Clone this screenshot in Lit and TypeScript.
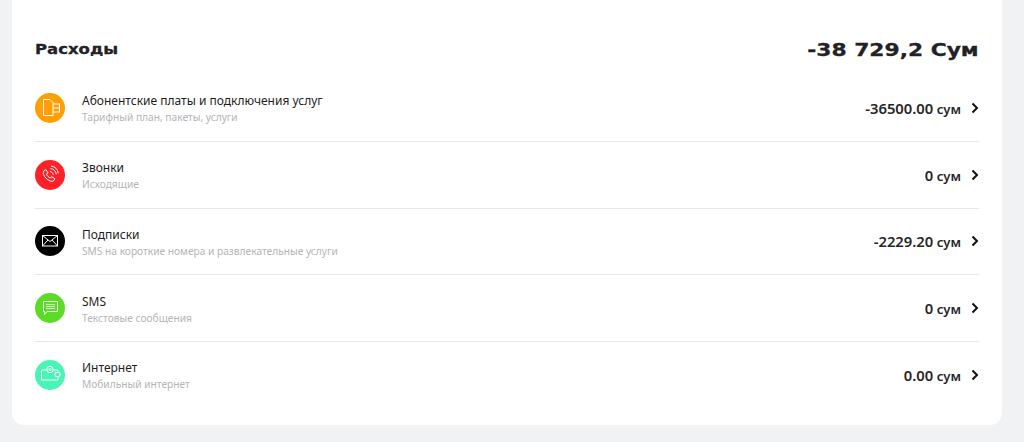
import { LitElement, html, css, svg } from "lit";
import { customElement } from "lit/decorators.js";

const icons = {
  plan: svg`<path d="M8.500 6.500h6.500l3 3v13h-9.500z"/><path d="M18 11h6.500M18 15h6.500M18 19h6.500M24.500 10.500v9"/>`,
  call: svg`<path d="M9.200 10.500l1.700-.9 2 3.200-1.300 1.300c.5 1.700 2 3.200 3.800 3.900l1.300-1.300 3.100 2-.9 1.700c-.8 1-2.400 1.100-3.800.5-3.200-1.300-5.600-3.700-6.600-6.500-.4-1.400-.2-2.900.7-3.900z"/><path d="M15 11.500c1.800.3 3 1.500 3.300 3.300M15.500 8.500c3.200.4 5.400 2.600 5.800 5.800M16 6c4 .5 6.800 3.300 7.300 7.300"/>`,
  mail: svg`<rect x="7.500" y="9.500" width="15" height="10.500"/><path d="M7.500 9.500l7.500 6 7.500-6M7.500 20l5.500-6M22.500 20l-5.500-6"/>`,
  sms: svg`<path d="M8.500 8.500h14v10h-10.500l-2.500 3v-3h-1z"/><path d="M11 11.500h9M11 13.500h9M11 15.500h9" stroke-width="1.200" opacity=".75"/>`,
  net: svg`<path d="M11.800 10H6.500v10H23v-3.500M23 12.500V10h-4.800"/><circle cx="15" cy="9.500" r="3.200"/><circle cx="15" cy="9.500" r="1"/><rect x="20" y="12.500" width="5" height="4" rx="1"/>`,
};

type Row = {
  icon: keyof typeof icons;
  color: string;
  title: string;
  sub: string;
  value: string;
};

const rows: Row[] = [
  { icon: "plan", color: "#ff9f00", title: "Абонентские платы и подключения услуг", sub: "Тарифный план, пакеты, услуги", value: "-36500.00" },
  { icon: "call", color: "#ff2128", title: "Звонки", sub: "Исходящие", value: "0" },
  { icon: "mail", color: "#000000", title: "Подписки", sub: "SMS на короткие номера и развлекательные услуги", value: "-2229.20" },
  { icon: "sms", color: "#5bdc27", title: "SMS", sub: "Текстовые сообщения", value: "0" },
  { icon: "net", color: "#47f5b4", title: "Интернет", sub: "Мобильный интернет", value: "0.00" },
];

@customElement("app-root")
export class AppRoot extends LitElement {
  static styles = css`
    :host {
      display: block;
      height: 442px;
      overflow: hidden;
      background: #f1f2f4;
      font-family: "Noto Sans", "Open Sans", sans-serif;
      color: #1e1e23;
    }
    .card {
      margin: 0 22px 0 12px;
      height: 425px;
      box-sizing: border-box;
      padding: 38px 23px 0;
      background: #fff;
      border-radius: 0 0 12px 12px;
    }
    .head {
      display: flex;
      justify-content: space-between;
      align-items: center;
      height: 22px;
      margin-bottom: 15px;
      font-family: "DejaVu Sans", sans-serif;
      font-weight: 700;
      color: #222226;
      -webkit-text-stroke: 0.3px #222226;
    }
    .title {
      font-size: 13.500px;
      transform: scaleX(1.22);
      transform-origin: left center;
    }
    .total {
      font-size: 18px;
      transform: scaleX(1.21);
      transform-origin: right center;
    }
    .row {
      display: flex;
      align-items: center;
      height: 65.750px;
      border-bottom: 1px solid #e6e7e9;
    }
    .row:last-child {
      border-bottom: none;
    }
    .badge {
      flex: none;
      width: 30px;
      height: 30px;
      border-radius: 50%;
      margin-right: 17px;
    }
    .badge svg {
      display: block;
      fill: none;
      stroke: #fff;
      stroke-width: 1;
    }
    .text {
      flex: 1;
      min-width: 0;
      padding-top: 2px;
    }
    .name {
      font-size: 12px;
      line-height: 16px;
    }
    .sub {
      font-size: 10.200px;
      line-height: 14px;
      margin-top: 1px;
      color: #b4b4b8;
    }
    .amount {
      font-size: 13px;
      font-weight: 600;
      color: #26262b;
    }
    .value {
      font-size: 14.800px;
    }
    .chevron {
      flex: none;
      display: block;
      margin-left: 10px;
      fill: none;
      stroke: #111;
      stroke-width: 2;
    }
  `;

  render() {
    return html`
      <div class="card">
        <div class="head">
          <span class="title">Расходы</span>
          <span class="total">-38 729,2 Сум</span>
        </div>
        ${rows.map(
          (r) => html`
            <div class="row">
              <div class="badge" style="background:${r.color}">
                <svg width="30" height="30" viewBox="0 0 30 30">${icons[r.icon]}</svg>
              </div>
              <div class="text">
                <div class="name">${r.title}</div>
                <div class="sub">${r.sub}</div>
              </div>
              <span class="amount"><span class="value">${r.value}</span> сум</span>
              <svg class="chevron" width="8" height="12" viewBox="0 0 8 12"><path d="M1.500 1.500L6 6l-4.500 4.500" /></svg>
            </div>
          `
        )}
      </div>
    `;
  }
}
